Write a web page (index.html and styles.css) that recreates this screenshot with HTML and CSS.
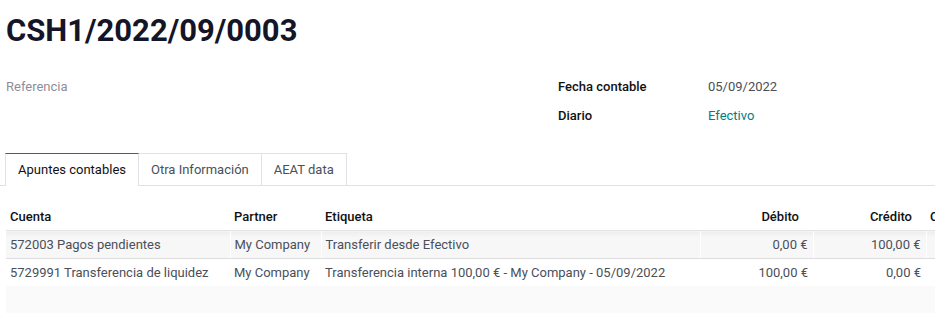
FILE: index.html
```html
<!DOCTYPE html>
<html lang="es">
<head>
  <meta charset="UTF-8" />
  <meta name="viewport" content="width=device-width, initial-scale=1.0"/>
  <title>CSH1/2022/09/0003</title>
  <link rel="stylesheet" href="styles.css">
</head>
<body>
  <div class="sheet">
    <h1 class="move-name">CSH1/2022/09/0003</h1>

    <div class="move-header">
      <div class="ref-col">
        <span class="placeholder">Referencia</span>
      </div>
      <div class="info-col">
        <span class="field-label">Fecha contable</span>
        <span class="field-value">05/09/2022</span>
        <span class="field-label">Diario</span>
        <span class="field-value link">Efectivo</span>
      </div>
    </div>
  </div>

  <ul class="tabs">
    <li class="tab active">Apuntes contables</li>
    <li class="tab">Otra Información</li>
    <li class="tab">AEAT data</li>
  </ul>

  <div class="lines-wrap">
    <table class="lines">
      <colgroup>
        <col class="c-account">
        <col class="c-partner">
        <col class="c-label">
        <col class="c-amount">
        <col class="c-amount">
        <col class="c-rest">
      </colgroup>
      <thead>
        <tr>
          <th>Cuenta</th>
          <th>Partner</th>
          <th>Etiqueta</th>
          <th class="num">Débito</th>
          <th class="num">Crédito</th>
          <th>Cuenta analítica</th>
        </tr>
      </thead>
      <tbody>
        <tr class="hover">
          <td>572003 Pagos pendientes</td>
          <td>My Company</td>
          <td>Transferir desde Efectivo</td>
          <td class="num">0,00 €</td>
          <td class="num">100,00 €</td>
          <td></td>
        </tr>
        <tr>
          <td>5729991 Transferencia de liquidez</td>
          <td>My Company</td>
          <td>Transferencia interna 100,00 € - My Company - 05/09/2022</td>
          <td class="num">100,00 €</td>
          <td class="num">0,00 €</td>
          <td></td>
        </tr>
        <tr class="filler">
          <td colspan="6"></td>
        </tr>
      </tbody>
    </table>
  </div>
</body>
</html>
```

FILE: styles.css
```css
body {
  font-family: Roboto, 'Liberation Sans', sans-serif;
  font-size: 13px;
  color: #4a4f59;
  background-color: #ffffff;
  margin: 0;
  overflow: hidden;
}

.sheet {
  padding-left: 6px;
}

.move-name {
  font-size: 31px;
  font-weight: 700;
  line-height: 36px;
  color: #141526;
  margin: 13px 0 0 0;
}

.move-header {
  display: grid;
  grid-template-columns: 552px 1fr;
  margin-top: 28px;
}

.placeholder {
  color: #8e8e9a;
  line-height: 20px;
}

.info-col {
  display: grid;
  grid-template-columns: 150px 1fr;
  grid-auto-rows: 29px;
}

.field-label {
  font-weight: 500;
  color: #111111;
  line-height: 19px;
}

.field-value {
  line-height: 19px;
}

.field-value.link {
  color: #017e84;
}

.tabs {
  display: flex;
  list-style: none;
  margin: 18px 0 0 0;
  padding: 0 0 0 5px;
  border-bottom: 1px solid #dee2e6;
}

.tab {
  padding: 0 12px;
  height: 31px;
  line-height: 31px;
  border: 1px solid #dee2e6;
  border-left: none;
  margin-bottom: -1px;
  border-bottom: none;
  color: #4a4f59;
}

.tab.active {
  border-left: 1px solid #dee2e6;
  border-top-color: #714b67;
  background-color: #ffffff;
  color: #111111;
  height: 32px;
}

.tab:first-child {
  border-left: 1px solid #dee2e6;
}

.lines-wrap {
  padding-left: 6px;
  margin-top: 16px;
}

.lines {
  border-collapse: collapse;
  table-layout: fixed;
  width: 1100px;
}

.c-account { width: 224px; }
.c-partner { width: 91px; }
.c-label { width: 379px; }
.c-amount { width: 113px; }

.lines th {
  font-weight: 500;
  color: #111111;
  text-align: left;
  height: 28px;
  padding: 0 4px;
  border-bottom: 1px solid #e4e4e4;
  white-space: nowrap;
  overflow: hidden;
}

.lines th.num {
  text-align: right;
  padding-right: 14px;
}

.lines td {
  height: 27px;
  padding: 0 4px;
  white-space: nowrap;
  overflow: hidden;
}

.lines td.num {
  text-align: right;
  padding-right: 5px;
}

.lines tr.hover td {
  background-color: #f7f7f7;
  background-image: linear-gradient(#ededed, #f7f7f7 6px);
  border-right: 1px solid #ffffff;
  border-bottom: 1px solid #dedede;
}

.lines tr.filler td {
  background-color: #fafafa;
}
```
